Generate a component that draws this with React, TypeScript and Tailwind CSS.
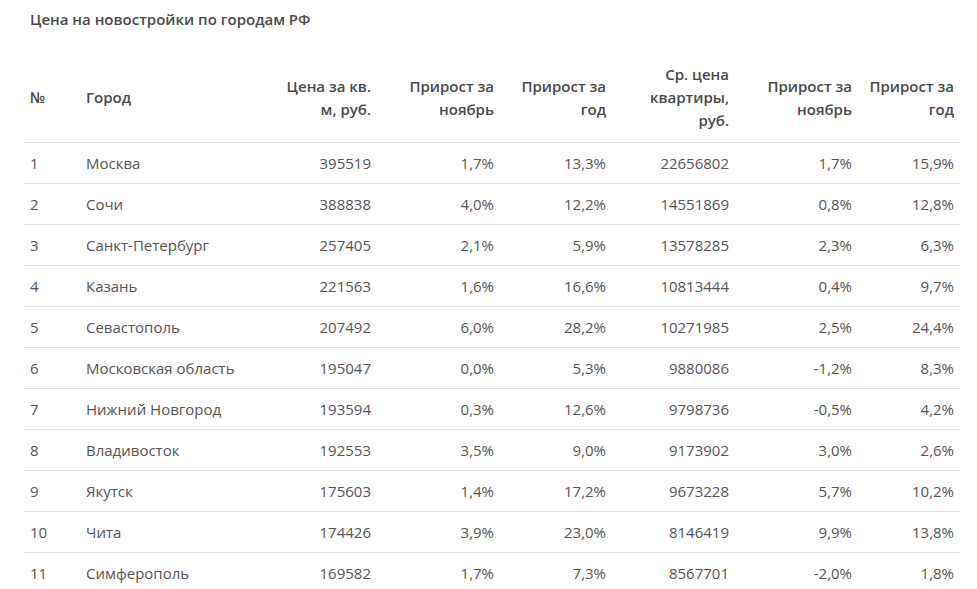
const rows: [number, string, string, string, string, string, string, string][] = [
  [1, "Москва", "395519", "1,7%", "13,3%", "22656802", "1,7%", "15,9%"],
  [2, "Сочи", "388838", "4,0%", "12,2%", "14551869", "0,8%", "12,8%"],
  [3, "Санкт-Петербург", "257405", "2,1%", "5,9%", "13578285", "2,3%", "6,3%"],
  [4, "Казань", "221563", "1,6%", "16,6%", "10813444", "0,4%", "9,7%"],
  [5, "Севастополь", "207492", "6,0%", "28,2%", "10271985", "2,5%", "24,4%"],
  [6, "Московская область", "195047", "0,0%", "5,3%", "9880086", "-1,2%", "8,3%"],
  [7, "Нижний Новгород", "193594", "0,3%", "12,6%", "9798736", "-0,5%", "4,2%"],
  [8, "Владивосток", "192553", "3,5%", "9,0%", "9173902", "3,0%", "2,6%"],
  [9, "Якутск", "175603", "1,4%", "17,2%", "9673228", "5,7%", "10,2%"],
  [10, "Чита", "174426", "3,9%", "23,0%", "8146419", "9,9%", "13,8%"],
  [11, "Симферополь", "169582", "1,7%", "7,3%", "8567701", "-2,0%", "1,8%"],
];

export default function App() {
  return (
    <div className="min-h-screen bg-white pl-6 pt-[8px] text-[#555] [font-family:'Open_Sans',sans-serif]">
      <h2 className="pl-[6px] text-[15px] font-semibold leading-[22px] text-[#4a4a4a]">
        Цена на новостройки по городам РФ
      </h2>
      <table className="mt-[24px] w-[936px] table-fixed border-collapse text-[15px] leading-[23px]">
        <colgroup>
          <col className="w-[56px]" />
          <col className="w-[187px]" />
          <col className="w-[110px]" />
          <col className="w-[123px]" />
          <col className="w-[112px]" />
          <col className="w-[123px]" />
          <col className="w-[123px]" />
          <col className="w-[102px]" />
        </colgroup>
        <thead>
          <tr className="h-[88px] border-b border-[#e2e2e2] text-[#4a4a4a]">
            <th className="px-[6px] text-left font-semibold">№</th>
            <th className="px-[6px] text-left font-semibold">Город</th>
            <th className="px-[6px] text-right font-semibold">Цена за кв. м, руб.</th>
            <th className="px-[6px] text-right font-semibold">Прирост за ноябрь</th>
            <th className="px-[6px] text-right font-semibold">Прирост за год</th>
            <th className="px-[6px] text-right font-semibold">Ср. цена квартиры, руб.</th>
            <th className="px-[6px] text-right font-semibold">Прирост за ноябрь</th>
            <th className="px-[6px] text-right font-semibold">Прирост за год</th>
          </tr>
        </thead>
        <tbody>
          {rows.map(([n, city, ...vals]) => (
            <tr key={n} className="h-[41px] border-b border-[#e2e2e2]">
              <td className="px-[6px] pt-px">{n}</td>
              <td className="px-[6px] pt-px">{city}</td>
              {vals.map((v, i) => (
                <td key={i} className="px-[6px] pt-px text-right">
                  {v}
                </td>
              ))}
            </tr>
          ))}
        </tbody>
      </table>
    </div>
  );
}
